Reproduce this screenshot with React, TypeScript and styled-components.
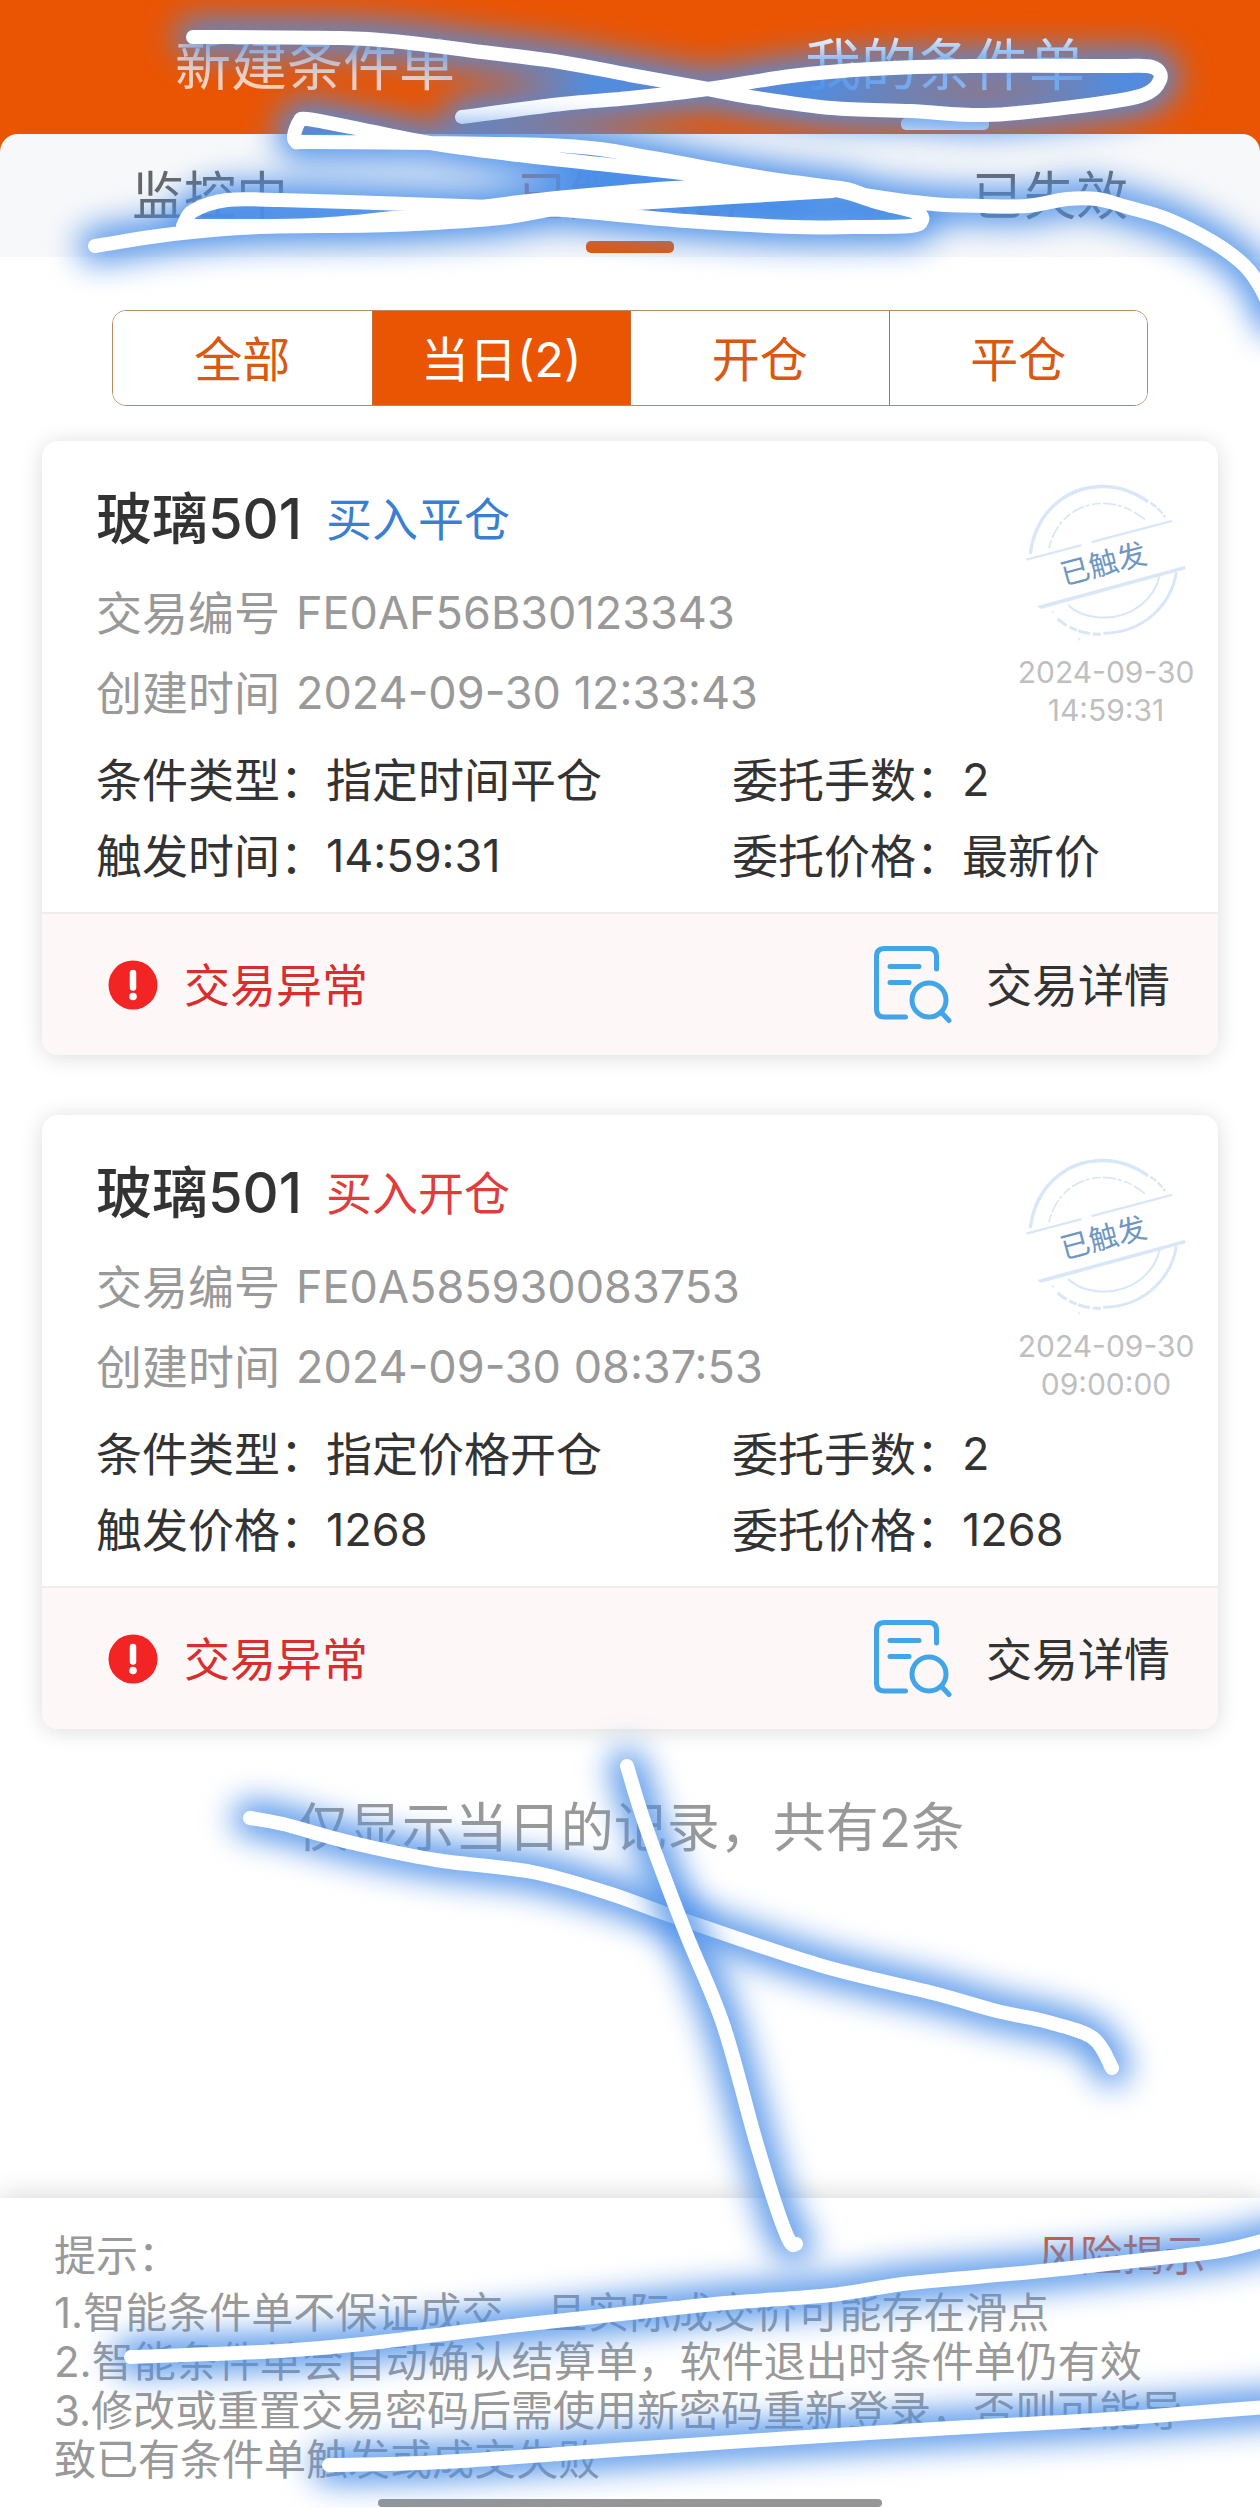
import React, { useState } from "react";
import styled, { createGlobalStyle } from "styled-components";

const ORANGE = "#ea5504";
const FONT = `Inter, "Noto Sans CJK SC", sans-serif`;

const GlobalStyle = createGlobalStyle`
  * { box-sizing: border-box; }
  body { margin: 0; background: #fff; font-family: ${FONT}; color: #333; }
  h2, p, dl, dd, dt, ol { margin: 0; padding: 0; }
  button { font-family: inherit; border: 0; padding: 0; background: none; cursor: pointer; color: inherit; }
`;

const Page = styled.div`
  position: relative;
  min-height: 100vh;
  display: flex;
  flex-direction: column;
  overflow: hidden;
`;

const Header = styled.header`
  background: ${ORANGE};
`;

const MainNav = styled.nav`
  display: grid;
  grid-template-columns: repeat(2, 1fr);
`;

const MainTab = styled.button<{ $active: boolean }>`
  display: flex;
  flex-direction: column;
  align-items: center;
  gap: 21px;
  padding: 33px 0 4px;
  font-size: 56px;
  line-height: 64px;
  color: ${(p) => (p.$active ? "#fff" : "rgba(255, 255, 255, 0.75)")};
`;

const SubNav = styled.nav`
  display: grid;
  grid-template-columns: repeat(3, 1fr);
  background: #f7f8fa;
  border-radius: 18px 18px 0 0;
`;

const SubTab = styled.button<{ $active: boolean }>`
  display: flex;
  flex-direction: column;
  align-items: center;
  gap: 14px;
  padding: 33px 0 4px;
  font-size: 52px;
  line-height: 60px;
  color: ${(p) => (p.$active ? ORANGE : "#666")};
`;

const Indicator = styled.span<{ $color: string }>`
  width: 88px;
  height: 12px;
  border-radius: 5px;
  background: ${(p) => p.$color};
`;

const Filters = styled.div`
  display: grid;
  grid-template-columns: repeat(4, 1fr);
  height: 96px;
  margin: 53px 112px 0;
  border: 1px solid #b98a60;
  border-radius: 14px;
  overflow: hidden;
`;

const FilterButton = styled.button<{ $active: boolean }>`
  padding-top: 4px;
  font-size: 48px;
  line-height: 60px;
  color: ${(p) => (p.$active ? "#fff" : "#d8590f")};
  background: ${(p) => (p.$active ? ORANGE : "#fff")};

  & + & {
    border-left: 1px solid #c96a30;
  }
`;

const List = styled.main`
  display: flex;
  flex-direction: column;
  gap: 60px;
  padding: 35px 42px 0;
`;

const Card = styled.article`
  border-radius: 16px;
  background: #fff;
  box-shadow: 0 2px 22px rgba(0, 0, 0, 0.14);
  overflow: hidden;
`;

const CardBody = styled.div`
  padding: 41px 22px 26px 54px;
`;

const CardTop = styled.div`
  display: flex;
  justify-content: space-between;
`;

const Summary = styled.div`
  padding-top: 5px;
`;

const TitleRow = styled.div`
  display: flex;
  align-items: center;
  gap: 24px;
  margin-bottom: 32px;
  line-height: 64px;
`;

const Title = styled.h2`
  font-size: 56px;
  font-weight: 500;
`;

const Side = styled.span<{ $color: string }>`
  font-size: 46px;
  color: ${(p) => p.$color};
`;

const Meta = styled.dl`
  display: grid;
  grid-template-columns: auto 1fr;
  gap: 20px 16px;
  font-size: 46px;
  line-height: 60px;
  color: #999;

  dd { font-size: 45px; }
`;

const StampColumn = styled.div`
  width: 180px;
  display: flex;
  flex-direction: column;
  align-items: center;
  gap: 11px;
  font-size: 30px;
  line-height: 38px;
  text-align: center;
  color: #bfbfbf;
`;

const Fields = styled.dl`
  display: grid;
  grid-template-columns: 1fr 464px;
  row-gap: 16px;
  margin-top: 21px;
  font-size: 46px;
  line-height: 60px;
`;

const Field = styled.div`
  display: flex;
`;

const FieldValue = styled.dd<{ $numeric: boolean }>`
  font-size: ${(p) => (p.$numeric ? "45px" : "46px")};
`;

const CardFooter = styled.footer`
  display: flex;
  align-items: center;
  justify-content: space-between;
  height: 143px;
  padding: 0 48px 0 66px;
  border-top: 2px solid #eeecec;
  background: #fdf7f7;
  font-size: 46px;
  line-height: 60px;
`;

const Status = styled.span`
  display: flex;
  align-items: center;
  gap: 26px;
  color: #d92e2e;
`;

const DetailButton = styled.button`
  display: flex;
  align-items: center;
  gap: 34px;
  font-size: 46px;
  line-height: 60px;
`;

const Count = styled.p`
  margin: 67px 0 120px;
  font-size: 53px;
  line-height: 64px;
  text-align: center;
  color: #999;
`;

const Tips = styled.section`
  margin-top: auto;
  height: 310px;
  display: flex;
  flex-direction: column;
  padding: 33px 54px 0;
  background: #fff;
  box-shadow: 0 -2px 26px rgba(0, 0, 0, 0.16);
  font-size: 42px;
  line-height: 49px;
  color: #999;
`;

const TipsHead = styled.div`
  display: flex;
  justify-content: space-between;
  margin-bottom: 8px;
`;

const RiskLink = styled.a`
  color: #e0551c;
  text-decoration: none;
`;

const TipsList = styled.ol`
  list-style: none;
`;

const HomeBar = styled.div`
  width: 504px;
  height: 8px;
  margin: auto auto 1px;
  border-radius: 4px;
  background: #969696;
`;

const Scribbles = styled.svg`
  position: absolute;
  top: 0;
  left: 0;
  width: 100%;
  pointer-events: none;
`;

const AlertIcon = () => (
  <svg width="50" height="50" viewBox="0 0 50 50" aria-hidden="true">
    <circle cx="25" cy="25" r="24.5" fill="#f22424" />
    <path d="M25 13V27.500" stroke="#fff" strokeWidth="6.5" strokeLinecap="round" />
    <circle cx="25" cy="36.500" r="3.8" fill="#fff" />
  </svg>
);

const DetailIcon = () => (
  <svg width="78" height="78" viewBox="0 0 78 78" fill="none" stroke="#41a5e8" strokeWidth="5" strokeLinecap="round" aria-hidden="true">
    <path d="M62.500 23V10.500Q62.500 2.500 54.500 2.500H10.500Q2.500 2.500 2.500 10.500V63Q2.500 71 10.500 71H31.500" />
    <path d="M16 20.500H45M16 36.500H35" />
    <circle cx="55" cy="54" r="17" />
    <path d="M67 66L75 74.500" />
  </svg>
);

const Stamp = () => (
  <svg width="163" height="160" viewBox="70 65 490 480" fill="none" role="img" aria-label="已触发">
    <g stroke="#d8e7f8" strokeLinecap="butt">
      <path d="M86 281C100 165 185 80 300 78C350 77 395 92 440 124" strokeWidth="10" />
      <path d="M447 127C465 139 480 153 491 170" strokeWidth="7" strokeDasharray="22 5" />
      <path d="M142 264C158 190 215 131 300 129C350 128 395 147 434 181" strokeWidth="5" strokeDasharray="26 7 40 5 12 8" />
      <path d="M74 298L240 254M270 245L512 181" strokeWidth="7" />
      <path d="M108 438L550 318L552 326L118 445Z" fill="#d8e7f8" strokeWidth="2" />
      <path d="M525 336C512 420 440 517 305 519" strokeWidth="9" />
      <path d="M298 522C250 524 200 505 168 476" strokeWidth="9" strokeDasharray="24 9 36 5" />
      <path d="M475 345C460 415 395 470 310 472C265 472 225 458 200 434" strokeWidth="6" />
      <path d="M232 533V541M151 454L156 459" strokeWidth="4" />
    </g>
    <text x="306" y="341" transform="rotate(-15 310 310)" textAnchor="middle" fontSize="88" fill="#7096c2" fontFamily={FONT}>
      已触发
    </text>
  </svg>
);

type Point = [number, number];

/* Turns a list of points into a smooth curve that passes through each one. */
const smooth = (pts: Point[]) => {
  let d = `M${pts[0][0]} ${pts[0][1]}`;
  for (let i = 0; i < pts.length - 1; i++) {
    const a = pts[i - 1] || pts[i];
    const b = pts[i];
    const c = pts[i + 1];
    const e = pts[i + 2] || c;
    d += `C${b[0] + (c[0] - a[0]) / 6} ${b[1] + (c[1] - a[1]) / 6} ${c[0] - (e[0] - b[0]) / 6} ${c[1] - (e[1] - b[1]) / 6} ${c[0]} ${c[1]}`;
  }
  return d;
};

const STROKES: Point[][][] = [
  [
    [[193, 37], [341, 38], [402, 42], [482, 52], [560, 62], [630, 75], [708, 89], [750, 97], [831, 108], [911, 111], [986, 115], [1072, 107], [1140, 96], [1160, 80], [1152, 67], [1112, 66], [971, 66], [871, 69], [791, 76], [708, 89], [630, 98], [562, 104], [462, 117]],
  ],
  [
    [[95, 246], [173, 234], [260, 227], [390, 225], [500, 218], [563, 208], [653, 202], [832, 191]],
    [[193, 226], [313, 225], [410, 216], [520, 202], [600, 194], [700, 187], [832, 189]],
    [[832, 187], [793, 182], [740, 174], [653, 158], [600, 149], [547, 145], [430, 143], [310, 142], [297, 142], [294, 136], [299, 122], [307, 119], [350, 127], [430, 143], [510, 154], [600, 164], [700, 175], [800, 186], [840, 191], [880, 203], [915, 212], [922, 220], [910, 226], [853, 227], [793, 227], [687, 221], [563, 210], [493, 207], [407, 204], [280, 200], [227, 200], [193, 211], [183, 226]],
    [[640, 162], [740, 181], [832, 190]],
    [[700, 181], [832, 187], [870, 196], [933, 204], [983, 206], [1027, 206], [1067, 199], [1097, 199], [1127, 207], [1167, 219], [1213, 242], [1245, 266], [1262, 290], [1275, 320]],
  ],
  [
    [[250, 1818], [283, 1824], [353, 1843], [436, 1860], [532, 1872], [608, 1893], [678, 1918], [819, 1965], [933, 1993], [997, 2011], [1048, 2022], [1093, 2038], [1112, 2068]],
  ],
  [
    [[627, 1766], [646, 1827], [685, 1931], [723, 2024], [755, 2138], [777, 2209], [790, 2242], [796, 2244]],
  ],
  [
    [[131, 2357], [281, 2351], [362, 2344], [502, 2327], [630, 2313], [726, 2303], [831, 2295], [911, 2283], [1032, 2272], [1152, 2259], [1225, 2250], [1280, 2236]],
  ],
  [
    [[329, 2465], [442, 2462], [630, 2449], [791, 2438], [951, 2428], [1112, 2419], [1280, 2406]],
  ],
];

const Drawing = () => (
  <Scribbles viewBox="0 0 1260 2508" fill="none" strokeLinecap="round" strokeLinejoin="round" aria-hidden="true">
    <defs>
      <filter id="glow" filterUnits="userSpaceOnUse" x="-60" y="-60" width="1380" height="2628" colorInterpolationFilters="sRGB">
        <feGaussianBlur stdDeviation="16" />
      </filter>
    </defs>
    {STROKES.map((group, i) => {
      const d = group.map(smooth).join("");
      return (
        <g key={i}>
          <path d={d} stroke="#4b8fe8" strokeWidth="34" filter="url(#glow)" />
          <path d={d} stroke="#fff" strokeWidth="14" />
        </g>
      );
    })}
  </Scribbles>
);

interface Order {
  id: string;
  side: string;
  sideColor: string;
  created: string;
  firedDate: string;
  firedTime: string;
  fields: [string, string][];
}

const ORDERS: Order[] = [
  {
    id: "FE0AF56B30123343",
    side: "买入平仓",
    sideColor: "#3a80d2",
    created: "2024-09-30 12:33:43",
    firedDate: "2024-09-30",
    firedTime: "14:59:31",
    fields: [["条件类型：", "指定时间平仓"], ["委托手数：", "2"], ["触发时间：", "14:59:31"], ["委托价格：", "最新价"]],
  },
  {
    id: "FE0A585930083753",
    side: "买入开仓",
    sideColor: "#e03c3c",
    created: "2024-09-30 08:37:53",
    firedDate: "2024-09-30",
    firedTime: "09:00:00",
    fields: [["条件类型：", "指定价格开仓"], ["委托手数：", "2"], ["触发价格：", "1268"], ["委托价格：", "1268"]],
  },
];

const OrderCard = ({ order }: { order: Order }) => (
  <Card>
    <CardBody>
      <CardTop>
        <Summary>
          <TitleRow>
            <Title>玻璃501</Title>
            <Side $color={order.sideColor}>{order.side}</Side>
          </TitleRow>
          <Meta>
            <dt>交易编号</dt>
            <dd>{order.id}</dd>
            <dt>创建时间</dt>
            <dd>{order.created}</dd>
          </Meta>
        </Summary>
        <StampColumn>
          <Stamp />
          <div>
            <div>{order.firedDate}</div>
            <div>{order.firedTime}</div>
          </div>
        </StampColumn>
      </CardTop>
      <Fields>
        {order.fields.map(([label, value]) => (
          <Field key={label}>
            <dt>{label}</dt>
            <FieldValue $numeric={/^[\d:]+$/.test(value)}>{value}</FieldValue>
          </Field>
        ))}
      </Fields>
    </CardBody>
    <CardFooter>
      <Status>
        <AlertIcon />
        交易异常
      </Status>
      <DetailButton type="button">
        <DetailIcon />
        交易详情
      </DetailButton>
    </CardFooter>
  </Card>
);

const MAIN_TABS = ["新建条件单", "我的条件单"];
const SUB_TABS = ["监控中", "已触发(2)", "已失效"];
const FILTERS = ["全部", "当日(2)", "开仓", "平仓"];

export default function App() {
  const [mainTab, setMainTab] = useState(1);
  const [subTab, setSubTab] = useState(1);
  const [filter, setFilter] = useState(1);

  return (
    <Page>
      <GlobalStyle />
      <Header>
        <MainNav>
          {MAIN_TABS.map((label, i) => (
            <MainTab key={label} type="button" $active={i === mainTab} onClick={() => setMainTab(i)}>
              {label}
              <Indicator $color={i === mainTab ? "#fff" : "transparent"} />
            </MainTab>
          ))}
        </MainNav>
        <SubNav>
          {SUB_TABS.map((label, i) => (
            <SubTab key={label} type="button" $active={i === subTab} onClick={() => setSubTab(i)}>
              {label}
              <Indicator $color={i === subTab ? ORANGE : "transparent"} />
            </SubTab>
          ))}
        </SubNav>
      </Header>
      <Filters>
        {FILTERS.map((label, i) => (
          <FilterButton key={label} type="button" $active={i === filter} onClick={() => setFilter(i)}>
            {label}
          </FilterButton>
        ))}
      </Filters>
      <List>
        {ORDERS.map((order) => (
          <OrderCard key={order.id} order={order} />
        ))}
      </List>
      <Count>仅显示当日的记录，共有2条</Count>
      <Tips>
        <TipsHead>
          <span>提示：</span>
          <RiskLink href="#risk">风险揭示</RiskLink>
        </TipsHead>
        <TipsList>
          <li>1.智能条件单不保证成交，且实际成交价可能存在滑点</li>
          <li>2.智能条件单会自动确认结算单，软件退出时条件单仍有效</li>
          <li>3.修改或重置交易密码后需使用新密码重新登录，否则可能导致已有条件单触发或成交失败</li>
        </TipsList>
        <HomeBar />
      </Tips>
      <Drawing />
    </Page>
  );
}
